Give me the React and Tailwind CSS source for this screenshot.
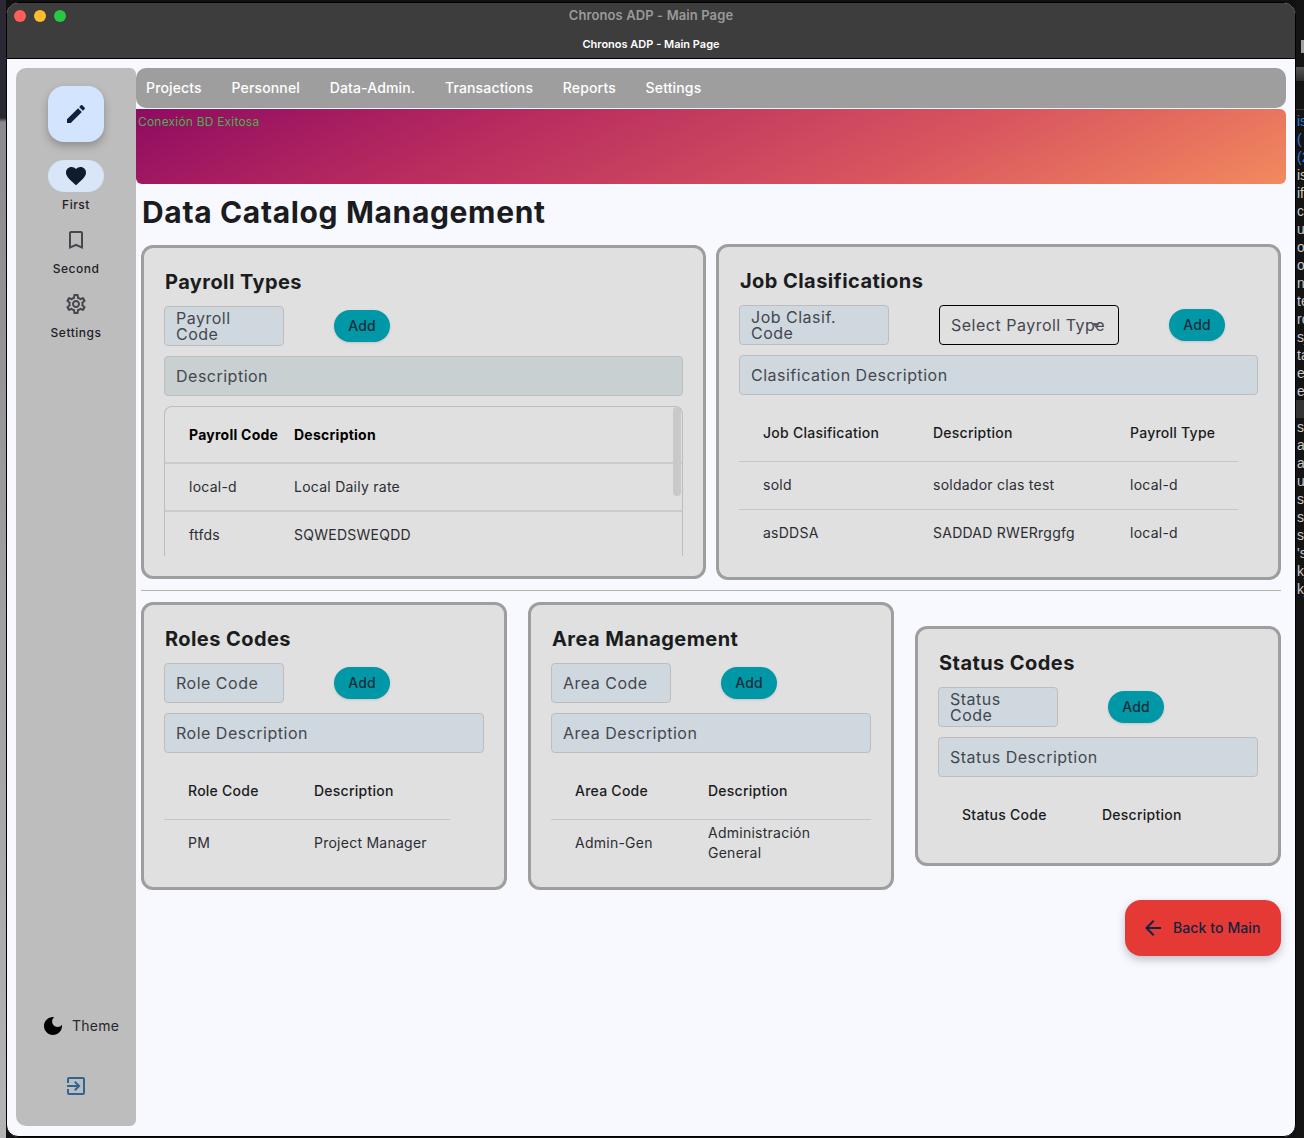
import React from "react";

const NAV_ITEMS = ["Projects", "Personnel", "Data-Admin.", "Transactions", "Reports", "Settings"];

// What shows of the editor window behind the app, one clipped line each
const BEHIND = ["is", "(", "(2", "is", "if", "c", "up", "or", "or", "ne", "te", "ro", "s_", "ta", "e", "e", "", "s", "ac", "ac", "u", "s", "s", "s", "'s", "k_", "k_"];

const Icon = ({ d, className }) => (
  <svg viewBox="0 0 24 24" fill="currentColor" className={className}>
    <path d={d} />
  </svg>
);

const ICONS = {
  edit: "M3 17.25V21h3.75L17.81 9.94l-3.75-3.75L3 17.25zM20.71 7.04a.996.996 0 0 0 0-1.41l-2.34-2.34a.996.996 0 0 0-1.41 0l-1.83 1.83 3.75 3.75 1.83-1.83z",
  heart: "M12 21.35l-1.45-1.32C5.4 15.36 2 12.28 2 8.5 2 5.42 4.42 3 7.5 3c1.74 0 3.41.81 4.5 2.09C13.09 3.81 14.76 3 16.5 3 19.58 3 22 5.42 22 8.5c0 3.78-3.4 6.86-8.55 11.54L12 21.35z",
  bookmark: "M17 3H7c-1.1 0-2 .9-2 2v16l7-3 7 3V5c0-1.1-.9-2-2-2zm0 15l-5-2.18L7 18V5h10v13z",
  settings: "M19.43 12.98c.04-.32.07-.64.07-.98 0-.34-.03-.66-.07-.98l2.11-1.65c.19-.15.24-.42.12-.64l-2-3.46c-.09-.16-.26-.25-.44-.25-.06 0-.12.01-.17.03l-2.49 1c-.52-.4-1.08-.73-1.69-.98l-.38-2.65C14.46 2.18 14.25 2 14 2h-4c-.25 0-.46.18-.49.42l-.38 2.65c-.61.25-1.17.59-1.69.98l-2.49-1c-.06-.02-.12-.03-.18-.03-.17 0-.34.09-.43.25l-2 3.46c-.13.22-.07.49.12.64l2.11 1.65c-.04.32-.07.65-.07.98 0 .33.03.66.07.98l-2.11 1.65c-.19.15-.24.42-.12.64l2 3.46c.09.16.26.25.44.25.06 0 .12-.01.17-.03l2.49-1c.52.4 1.08.73 1.69.98l.38 2.65c.03.24.24.42.49.42h4c.25 0 .46-.18.49-.42l.38-2.65c.61-.25 1.17-.59 1.69-.98l2.49 1c.06.02.12.03.18.03.17 0 .34-.09.43-.25l2-3.46c.12-.22.07-.49-.12-.64l-2.11-1.65zm-1.98-1.71c.04.31.05.52.05.73 0 .21-.02.43-.05.73l-.14 1.13.89.7 1.08.84-.7 1.21-1.27-.51-1.04-.42-.9.68c-.43.32-.84.56-1.25.73l-1.06.43-.16 1.13-.2 1.35h-1.4l-.19-1.35-.16-1.13-1.06-.43c-.43-.18-.83-.41-1.23-.71l-.91-.7-1.06.43-1.27.51-.7-1.21 1.08-.84.89-.7-.14-1.13c-.03-.31-.05-.54-.05-.74s.02-.43.05-.73l.14-1.13-.89-.7-1.08-.84.7-1.21 1.27.51 1.04.42.9-.68c.43-.32.84-.56 1.25-.73l1.06-.43.16-1.13.2-1.35h1.39l.19 1.35.16 1.13 1.06.43c.43.18.83.41 1.23.71l.91.7 1.06-.43 1.27-.51.7 1.21-1.07.85-.89.7.14 1.13zM12 8c-2.21 0-4 1.79-4 4s1.79 4 4 4 4-1.79 4-4-1.79-4-4-4zm0 6c-1.1 0-2-.9-2-2s.9-2 2-2 2 .9 2 2-.9 2-2 2z",
  moon: "M12 3c-4.97 0-9 4.03-9 9s4.03 9 9 9 9-4.03 9-9c0-.46-.04-.92-.1-1.36-.98 1.37-2.58 2.26-4.4 2.26-2.98 0-5.4-2.42-5.4-5.4 0-1.81.89-3.42 2.26-4.4-.44-.06-.9-.1-1.36-.1z",
  exit: "M10.09 15.59L11.5 17l5-5-5-5-1.41 1.41L12.67 11H3v2h9.67l-2.58 2.59zM19 3H5c-1.11 0-2 .9-2 2v4h2V5h14v14H5v-4H3v4c0 1.1.89 2 2 2h14c1.1 0 2-.9 2-2V5c0-1.1-.9-2-2-2z",
  back: "M20 11H7.83l5.59-5.59L12 4l-8 8 8 8 1.41-1.41L7.83 13H20v-2z",
};

const Field = ({ children, className = "", bg = "bg-[#cfd8df]" }) => (
  <div className={`h-10 flex items-center px-[11px] rounded-[4px] border border-[#bdbdbd] ${bg} text-base leading-4 tracking-[0.5px] text-[#44474e] ${className}`}>
    <span>{children}</span>
  </div>
);

const AddButton = () => (
  <div className="w-14 h-8 shrink-0 flex items-center justify-center rounded-2xl bg-[#0097a7] text-sm font-medium tracking-[0.1px] text-[#1f2d3a] shadow-sm">
    Add
  </div>
);

const Card = ({ title, children, className = "" }) => (
  <section className={`rounded-xl border-[3px] border-[#9e9e9e] bg-[#e0e0e0] p-5 flex flex-col gap-2.5 ${className}`}>
    <h2 className="h-7 pl-px text-xl leading-7 font-bold tracking-[0.43px] text-[#1a1c20]">{title}</h2>
    {children}
  </section>
);

const Row = ({ cols, cells, line = "", head, bold, wrap }) => {
  const height = head ? (line ? "h-[57px]" : "h-14") : line ? "h-12" : "h-[46px]";
  const tone = bold ? "font-bold text-black" : head ? "font-medium text-[#1a1c20]" : "text-[#2b2d33]";
  return (
    <div className={`grid ${cols} items-center pl-6 pr-6 text-sm leading-5 tracking-[0.25px] ${height} ${line} ${tone} ${wrap ? "" : "whitespace-nowrap"}`}>
      {cells.map((c) => (
        <span key={c}>{c}</span>
      ))}
    </div>
  );
};

const App = () => {
  return (
    <div className="w-[1304px] h-[1138px] flex overflow-hidden bg-[#111114] font-['Inter',sans-serif]">
      {/* desktop behind the window, left edge */}
      <div className="w-[6px] shrink-0 bg-[linear-gradient(180deg,#2a2833_0,#2a2833_118px,#8c8a8e_122px,#b4b4b4_100%)]" />

      {/* app window */}
      <div className="w-[1290px] shrink-0 mt-[2px] h-[1135px] flex flex-col overflow-hidden rounded-xl border border-black bg-[#f8f9ff]">
        <header className="relative h-14 shrink-0 flex flex-col items-center bg-[#3c3d3c] border-b border-black">
          <div className="absolute left-[7px] top-[7px] flex gap-2">
            <span className="w-3 h-3 rounded-full bg-[#ff5f57]" />
            <span className="w-3 h-3 rounded-full bg-[#febc2e]" />
            <span className="w-3 h-3 rounded-full bg-[#28c840]" />
          </div>
          <div className="h-[26px] flex items-center text-[13px] font-semibold tracking-[0.1px] text-[#9a9a9a]">Chronos ADP - Main Page</div>
          <div className="mt-2 h-[14px] flex items-center text-[11px] font-semibold text-white">Chronos ADP - Main Page</div>
        </header>

        <div className="flex-1 flex p-[9px] pb-[10px] min-h-0">
          {/* side rail */}
          <aside className="w-[120px] shrink-0 flex flex-col items-center rounded-l-[10px] rounded-r-[6px] bg-[#bdbdbd] pt-[18px] pb-[28px]">
            <div className="w-14 h-14 flex items-center justify-center rounded-2xl bg-[#d3e4ff] text-[#0f2338] shadow-[0_4px_8px_rgba(0,0,0,0.25)]">
              <Icon d={ICONS.edit} className="w-6 h-6" />
            </div>
            <div className="mt-[18px] w-14 h-8 flex items-center justify-center rounded-2xl bg-[#d9e5f8] text-[#0f1c2e]">
              <Icon d={ICONS.heart} className="w-6 h-6" />
            </div>
            <div className="mt-[5px] text-xs leading-4 font-medium tracking-[0.5px] text-[#1f2228]">First</div>
            <div className="mt-[15px] h-6 text-[#44474e]">
              <Icon d={ICONS.bookmark} className="w-6 h-6" />
            </div>
            <div className="mt-[9px] text-xs leading-4 font-medium tracking-[0.5px] text-[#1f2228]">Second</div>
            <div className="mt-[15px] h-6 text-[#44474e]">
              <Icon d={ICONS.settings} className="w-6 h-6" />
            </div>
            <div className="mt-[9px] text-xs leading-4 font-medium tracking-[0.5px] text-[#1f2228]">Settings</div>

            <div className="mt-auto flex items-center gap-[7px] pl-2">
              <Icon d={ICONS.moon} className="w-6 h-6 text-black" />
              <span className="text-sm tracking-[0.25px] text-[#26282c]">Theme</span>
            </div>
            <div className="mt-[36px] h-6 text-[#2f6497]">
              <Icon d={ICONS.exit} className="w-6 h-6" />
            </div>
          </aside>

          {/* main column */}
          <main className="flex-1 min-w-0 flex flex-col">
            <nav className="h-10 shrink-0 flex items-center gap-[29.7px] pl-[10px] rounded-[10px] bg-[#9e9e9e] text-sm font-medium tracking-[0.15px] text-white">
              {NAV_ITEMS.map((item) => (
                <span key={item}>{item}</span>
              ))}
            </nav>
            <div className="mt-px h-[75px] shrink-0 pl-[2px] pt-[5px] rounded-b-[6px] rounded-tr-[6px] bg-[linear-gradient(155deg,#8f0b62_0%,#b5285f_28%,#d9565f_68%,#f28a5e_100%)] text-xs leading-4 tracking-[0.2px] text-[#4caf50]">
              Conexión BD Exitosa
            </div>

            <div className="px-[5px]">
              <h1 className="h-[60px] pb-[4px] flex items-center pl-px text-[30px] font-bold tracking-[0.65px] text-[#1a1c20]">Data Catalog Management</h1>

              <div className="flex items-center gap-2.5">
                <Card title="Payroll Types" className="flex-1 h-[334px]">
                  <div className="flex items-center gap-[50px]">
                    <Field className="w-[120px]">Payroll Code</Field>
                    <AddButton />
                  </div>
                  <Field bg="bg-[#c8d0d2]">Description</Field>
                  <div className="relative h-[150px] overflow-hidden rounded-t-lg border-x border-t border-[#bdbdbd]">
                    <Row head bold cols="grid-cols-[105px_1fr]" line="border-b-2 border-[#cbcbcb]" cells={["Payroll Code", "Description"]} />
                    <Row cols="grid-cols-[105px_1fr]" line="border-b-2 border-[#cbcbcb]" cells={["local-d", "Local Daily rate"]} />
                    <Row cols="grid-cols-[105px_1fr]" cells={["ftfds", "SQWEDSWEQDD"]} />
                    <div className="absolute right-[1px] top-0 w-2 h-[89px] rounded-full bg-[#c9c9c9]" />
                  </div>
                </Card>

                <Card title="Job Clasifications" className="flex-1 h-[336px]">
                  <div className="flex items-center gap-[50px]">
                    <Field className="w-[150px]">Job Clasif. Code</Field>
                    <div className="relative w-[180px] h-10 flex items-center px-[11px] rounded-[4px] border border-black text-base tracking-[0.5px] text-[#44474e] whitespace-nowrap">
                      Select Payroll Type
                      <span className="absolute right-[18px] top-[17px] w-0 h-0 border-x-[4px] border-t-[5px] border-x-transparent border-t-[#5a5d63]" />
                    </div>
                    <AddButton />
                  </div>
                  <Field>Clasification Description</Field>
                  <div className="w-[499px]">
                    <Row head cols="grid-cols-[170px_197px_1fr]" line="border-b border-[#c5c5cf]" cells={["Job Clasification", "Description", "Payroll Type"]} />
                    <Row cols="grid-cols-[170px_197px_1fr]" line="border-b border-[#c5c5cf] pb-px" cells={["sold", "soldador clas test", "local-d"]} />
                    <Row cols="grid-cols-[170px_197px_1fr]" cells={["asDDSA", "SADDAD RWERrggfg", "local-d"]} />
                  </div>
                </Card>
              </div>

              <div className="mt-2.5 h-px bg-[#b4b4b4]" />

              <div className="mt-[11px] flex items-center justify-between">
                <Card title="Roles Codes" className="w-[366px] h-[288px]">
                  <div className="flex items-center gap-[50px]">
                    <Field className="w-[120px]">Role Code</Field>
                    <AddButton />
                  </div>
                  <Field>Role Description</Field>
                  <div className="w-[286px]">
                    <Row head cols="grid-cols-[126px_1fr]" line="border-b border-[#c5c5cf]" cells={["Role Code", "Description"]} />
                    <Row cols="grid-cols-[126px_1fr]" cells={["PM", "Project Manager"]} />
                  </div>
                </Card>

                <Card title="Area Management" className="w-[366px] h-[288px]">
                  <div className="flex items-center gap-[50px]">
                    <Field className="w-[120px]">Area Code</Field>
                    <AddButton />
                  </div>
                  <Field>Area Description</Field>
                  <div className="w-[320px]">
                    <Row head cols="grid-cols-[133px_1fr]" line="border-b border-[#c5c5cf]" cells={["Area Code", "Description"]} />
                    <Row wrap cols="grid-cols-[133px_1fr]" cells={["Admin-Gen", "Administración General"]} />
                  </div>
                </Card>

                <Card title="Status Codes" className="w-[366px] h-[240px]">
                  <div className="flex items-center gap-[50px]">
                    <Field className="w-[120px]">Status Code</Field>
                    <AddButton />
                  </div>
                  <Field>Status Description</Field>
                  <Row head cols="grid-cols-[140px_1fr]" cells={["Status Code", "Description"]} />
                </Card>
              </div>

              <div className="mt-2.5 flex justify-end">
                <div className="w-[156px] h-14 flex items-center gap-2 pl-4 rounded-2xl bg-[#e53935] text-[#0f2440] text-sm font-medium tracking-[0.1px] shadow-[0_4px_8px_rgba(60,70,90,0.3)]">
                  <Icon d={ICONS.back} className="w-6 h-6" />
                  <span>Back to Main</span>
                </div>
              </div>
            </div>
          </main>
        </div>
      </div>

      {/* editor window behind, right edge */}
      <div className="w-[8px] shrink-0 overflow-hidden bg-[#141414] pt-[40px] text-[14px] leading-[18px] whitespace-nowrap text-[#c8c8c8] font-['Liberation_Sans',sans-serif]">
        <div className="ml-[5px] h-[13px] bg-[#a0a0a0]" />
        <div className="mt-[14px] h-[14px] bg-[linear-gradient(180deg,#555555,#2c2c2c)]" />
        <div className="mt-[28px] h-px bg-[#3a3a3a]" />
        <div className="mt-[2px] pl-px">
          {BEHIND.map((line, i) => (
            <div key={i} className={`h-[18px] ${i < 3 ? "text-[#2f7ed8]" : ""} ${line === "" ? "-ml-px bg-[#333333]" : ""}`}>
              {line}
            </div>
          ))}
        </div>
      </div>
    </div>
  );
};

export default App;
